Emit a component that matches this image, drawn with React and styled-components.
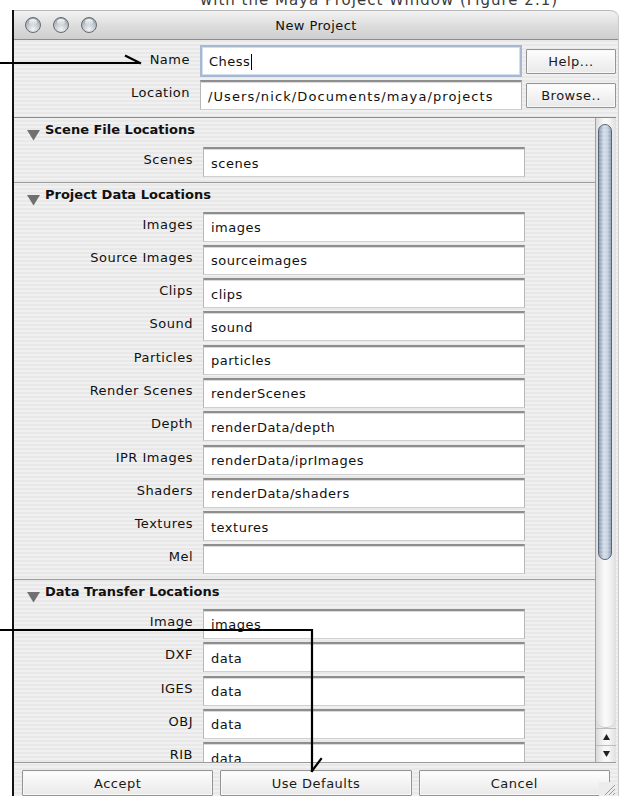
import React from "react";
import styled, { createGlobalStyle, css } from "styled-components";

const GlobalStyle = createGlobalStyle`
  html, body { margin: 0; padding: 0; background: #fff; }
  body {
    font-family: "DejaVu Sans", "Liberation Sans", sans-serif;
    font-size: 13px;
    color: #111;
  }
  *, *::before, *::after { box-sizing: border-box; }
`;

const pinstripe = css`
  background: repeating-linear-gradient(
    to bottom,
    #f0f0f0 0px,
    #f0f0f0 2px,
    #e8e8e8 2px,
    #e8e8e8 4px
  );
`;

const Page = styled.div`
  position: relative;
  width: 625px;
  height: 796px;
  overflow: hidden;
  background: #fff;
`;

/* bottom edge of a line of text from the page behind the dialog */
const Backdrop = styled.div`
  height: 10px;
  overflow: hidden;
  padding-left: 200px;
  white-space: nowrap;
`;

const BackdropText = styled.div`
  margin-top: -8px;
  font-size: 15px;
  line-height: 16px;
  letter-spacing: 1px;
  color: #3a3a3a;
`;

const Window = styled.div`
  position: relative;
  margin-left: 12px;
  width: 606px;
  height: 786px;
  display: flex;
  flex-direction: column;
  border-left: 2px solid #111;
  border-top-right-radius: 8px;
  box-shadow: 1px 0 0 #c8c8c8;
  overflow: hidden;
  ${pinstripe}
`;

const TitleBar = styled.div`
  flex: none;
  height: 30px;
  display: grid;
  grid-template-columns: 1fr auto 1fr;
  align-items: center;
  padding: 0 11px;
  background: linear-gradient(#f2f2f2, #dadada 60%, #cfcfcf);
  border-top: 1px solid #b8b8b8;
  border-bottom: 1px solid #8c8c8c;
  border-top-right-radius: 8px;
`;

const Lights = styled.div`
  display: flex;
  gap: 12px;
`;

const Light = styled.span`
  position: relative;
  width: 16px;
  height: 16px;
  border-radius: 50%;
  border: 1px solid #656b73;
  background: radial-gradient(
    circle at 50% 80%,
    #f3f5f7 0%,
    #c4cad1 45%,
    #8c939b 100%
  );
  &::after {
    content: "";
    position: absolute;
    left: 3px;
    right: 3px;
    top: 1px;
    height: 6px;
    border-radius: 50%;
    background: linear-gradient(rgba(255, 255, 255, 0.95), rgba(255, 255, 255, 0.15));
  }
`;

const Title = styled.div`
  font-size: 13px;
  letter-spacing: 0.4px;
  color: #111;
`;

const TopForm = styled.div`
  flex: none;
  display: grid;
  grid-template-columns: 182px 322px 90px;
  column-gap: 4px;
  row-gap: 3px;
  padding: 5px 0 7px;
`;

const Label = styled.div`
  align-self: start;
  padding-top: ${(p) => p.$top || 5}px;
  padding-right: ${(p) => p.$gap || 0}px;
  text-align: right;
  line-height: 16px;
  letter-spacing: 0.5px;
  color: #111;
  white-space: nowrap;
`;

const Field = styled.div`
  height: 30px;
  display: flex;
  align-items: center;
  padding: 1px 7px 0;
  background: #fff;
  border: 1px solid #b7b7b7;
  border-top: 2px solid #8e8e8e;
  border-bottom-color: #cfcfcf;
  box-shadow: inset 0 1px 0 #dadada;
  letter-spacing: ${(p) => p.$spacing || 0.5}px;
  color: #111;
  white-space: nowrap;
  overflow: hidden;
  ${(p) =>
    p.$focused &&
    css`
      height: 32px;
      border: 2px solid #a7b8d2;
      box-shadow: inset 0 0 0 1px #d3ddeb;
    `}
`;

const Caret = styled.span`
  display: inline-block;
  width: 1px;
  height: 16px;
  margin-left: 1px;
  background: #000;
`;

const PushButton = styled.button`
  font-family: inherit;
  font-size: 13px;
  letter-spacing: 0.5px;
  color: #1a1a1a;
  height: ${(p) => p.$h || 26}px;
  padding: 0;
  border: 1px solid #949494;
  border-radius: 1px;
  background: linear-gradient(#fefefe, #f3f3f3 50%, #e9e9e9);
  box-shadow: inset 0 0 0 1px #f8f8f8;
  cursor: default;
  align-self: center;
`;

const ScrollPane = styled.div`
  flex: none;
  height: 646px;
  display: flex;
  margin-right: 2px;
  border-top: 1px solid #8a8a8a;
  border-bottom: 1px solid #9a9a9a;
`;

const Viewport = styled.div`
  flex: 1;
  overflow: hidden;
`;

const Section = styled.section`
  padding-bottom: 4.5px;
  & + & {
    border-top: 1px solid #9b9b9b;
  }
`;

const SectionHeader = styled.div`
  height: 29px;
  display: flex;
  align-items: flex-start;
  gap: 5px;
  padding: 4px 0 0 13px;
  font-weight: bold;
  line-height: 16px;
  color: #111;
`;

const Expander = styled.svg`
  flex: none;
  margin-top: 8px;
`;

const Rows = styled.div`
  display: grid;
  grid-template-columns: 179px 322px;
  column-gap: 10px;
  row-gap: 3.3px;
`;

const Scrollbar = styled.div`
  flex: none;
  width: 21px;
  display: flex;
  flex-direction: column;
  border-left: 1px solid #a2a2a2;
  background: linear-gradient(to right, #d9d9d9, #f6f6f6 40%, #f8f8f8 60%, #e0e0e0);
`;

const Groove = styled.div`
  flex: 1;
  padding: 6px 4px 0 2px;
  border-bottom-left-radius: 9px;
  border-bottom-right-radius: 9px;
  border-bottom: 1px solid #c6c6c6;
  background: linear-gradient(to right, #dcdcdc, #fbfbfb 45%, #f2f2f2 70%, #dedede);
`;

const Thumb = styled.div`
  height: 436px;
  border-radius: 8px;
  border: 1px solid #56647a;
  background: repeating-linear-gradient(
      to bottom,
      rgba(255, 255, 255, 0.12) 0px,
      rgba(255, 255, 255, 0.12) 2px,
      rgba(0, 0, 0, 0) 2px,
      rgba(0, 0, 0, 0) 4px
    ),
    linear-gradient(to right, #8797ae, #d4dde9 40%, #c6d1e0 70%, #8e9db3);
`;

const ArrowButton = styled.div`
  flex: none;
  height: 17px;
  display: flex;
  align-items: center;
  justify-content: center;
  border-top: 1px solid #bcbcbc;
`;

const ButtonBar = styled.div`
  flex: 1;
  display: flex;
  align-items: flex-start;
  gap: 7px;
  padding: 7px 8px 0;
  & > ${PushButton} {
    flex: 1;
  }
`;

const Grip = styled.svg`
  position: absolute;
  right: 2px;
  bottom: 0;
`;

const Annotations = styled.svg`
  position: absolute;
  left: 0;
  top: 0;
  pointer-events: none;
`;

const sections = [
  { title: "Scene File Locations", rows: [["Scenes", "scenes"]] },
  {
    title: "Project Data Locations",
    rows: [
      ["Images", "images"],
      ["Source Images", "sourceimages"],
      ["Clips", "clips"],
      ["Sound", "sound"],
      ["Particles", "particles"],
      ["Render Scenes", "renderScenes"],
      ["Depth", "renderData/depth"],
      ["IPR Images", "renderData/iprImages"],
      ["Shaders", "renderData/shaders"],
      ["Textures", "textures"],
      ["Mel", ""],
    ],
  },
  {
    title: "Data Transfer Locations",
    rows: [
      ["Image", "images"],
      ["DXF", "data"],
      ["IGES", "data"],
      ["OBJ", "data"],
      ["RIB", "data"],
    ],
  },
];

function Triangle() {
  return (
    <Expander width="13" height="11" viewBox="0 0 13 11">
      <path d="M0 0 H13 L6.5 10.5 Z" fill="#707070" />
    </Expander>
  );
}

function ArrowGlyph({ up }) {
  return (
    <svg width="7" height="6" viewBox="0 0 7 6">
      <path d={up ? "M3.5 0 L7 6 H0 Z" : "M0 0 H7 L3.5 6 Z"} fill="#222" />
    </svg>
  );
}

export default function App() {
  return (
    <Page>
      <GlobalStyle />
      <Backdrop>
        <BackdropText>with the Maya Project Window (Figure 2.1)</BackdropText>
      </Backdrop>
      <Window>
        <TitleBar>
          <Lights>
            <Light />
            <Light />
            <Light />
          </Lights>
          <Title>New Project</Title>
          <span />
        </TitleBar>

        <TopForm>
          <Label $gap={6} $top={7}>Name</Label>
          <Field $focused>
            Chess
            <Caret />
          </Field>
          <PushButton $h={25}>Help...</PushButton>
          <Label $gap={6}>Location</Label>
          <Field $spacing={1.1}>/Users/nick/Documents/maya/projects</Field>
          <PushButton $h={25}>Browse..</PushButton>
        </TopForm>

        <ScrollPane>
          <Viewport>
            {sections.map((s) => (
              <Section key={s.title}>
                <SectionHeader>
                  <Triangle />
                  {s.title}
                </SectionHeader>
                <Rows>
                  {s.rows.map(([label, value]) => (
                    <React.Fragment key={label}>
                      <Label>{label}</Label>
                      <Field>{value}</Field>
                    </React.Fragment>
                  ))}
                </Rows>
              </Section>
            ))}
          </Viewport>
          <Scrollbar>
            <Groove>
              <Thumb />
            </Groove>
            <ArrowButton>
              <ArrowGlyph up />
            </ArrowButton>
            <ArrowButton>
              <ArrowGlyph />
            </ArrowButton>
          </Scrollbar>
        </ScrollPane>

        <ButtonBar>
          <PushButton>Accept</PushButton>
          <PushButton>Use Defaults</PushButton>
          <PushButton>Cancel</PushButton>
        </ButtonBar>

        <Grip width="17" height="14" viewBox="0 0 17 14">
          <rect x="0" y="0" width="17" height="14" fill="#ececec" />
          <path d="M6 13 L16 3 M10 13 L16 7 M14 13 L16 11" stroke="#9a9a9a" strokeWidth="1" />
        </Grip>
      </Window>

      <Annotations width="625" height="796" viewBox="0 0 625 796">
        <g fill="none" stroke="#000" strokeWidth="2.2" strokeLinecap="square">
          <path d="M0 63 H139" />
          <path d="M126 56 L140 63" />
          <path d="M0 630 H312 V771" />
          <path d="M312 771 L321 759" />
        </g>
      </Annotations>
    </Page>
  );
}
